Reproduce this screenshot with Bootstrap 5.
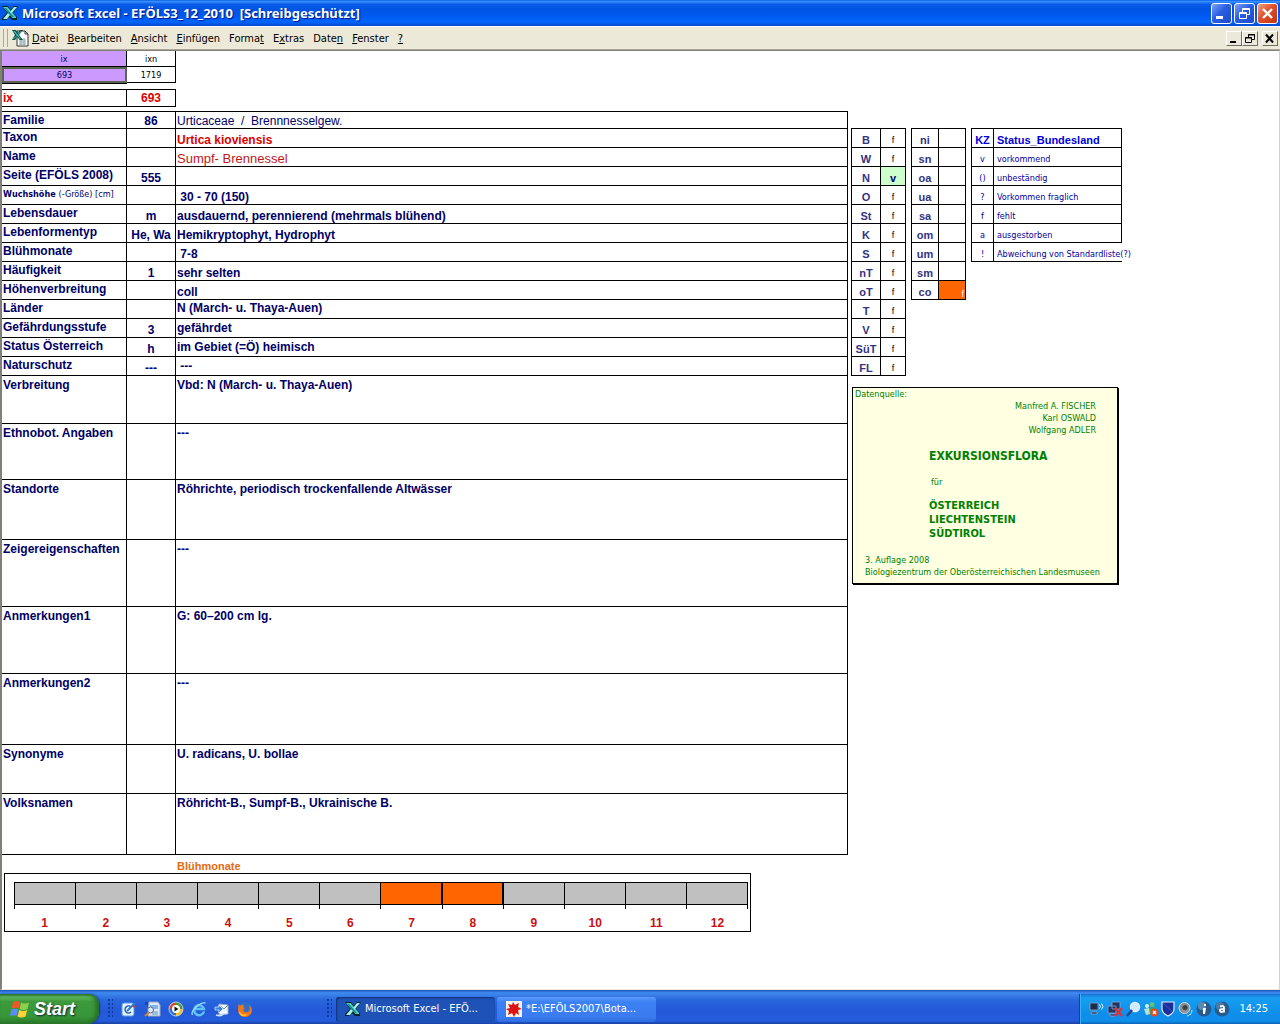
<!DOCTYPE html>
<html lang="de">
<head>
<meta charset="utf-8">
<meta name="viewport" content="width=device-width, initial-scale=1">
<title>Microsoft Excel - EFÖLS3_12_2010</title>
<link rel="stylesheet" href="https://cdn.jsdelivr.net/npm/bootstrap@5.3.0/dist/css/bootstrap.min.css">
<style>
:root{--ui:"DejaVu Sans Condensed","DejaVu Sans",Tahoma,sans-serif;--cell:"Liberation Sans",Arial,sans-serif;--navy:#000066}
body{font-family:var(--cell);font-size:12px;line-height:14px;color:var(--navy);background:#fff}
button{border-radius:0}
svg{display:block;flex:none}
/* window title */
.titlebar{height:26px;padding:0 2px;background:linear-gradient(#0058e6 0,#3a93ff 5%,#0b5cea 16%,#0054e3 35%,#0058ee 60%,#0066ff 85%,#0047c8 100%);color:#fff}
.titlebar h1{font:bold 13px/26px "Noto Sans",sans-serif;text-shadow:1px 1px 1px #00138c;white-space:pre;margin:0}
.titlebar .winset{gap:2px}
.winbtn{width:21px;height:21px;border:1px solid #fff;border-radius:3px;background:linear-gradient(135deg,#7da2f5,#2a5de0 45%,#1c49cf);padding:0}
.winbtn.close-win{background:linear-gradient(135deg,#f0a080,#e0502c 45%,#c2330e)}
/* menu */
.menubar{height:24px;background:#ece9d8;border-top:1px solid #fff;border-bottom:1px solid #aca899;padding:0 2px 0 3px;font-family:var(--ui)}
.menubar nav{gap:9px;padding:2px 0 0 3px}
.grip{width:5px;height:18px;border-left:1px solid #aca899;border-right:1px solid #aca899}
.menubar .mitem{border:0;background:none;padding:0;font-size:11px;line-height:14px;color:#000}
.mdibtn{width:16px;height:15px;padding:0;border:1px solid;border-color:#fff #716f64 #716f64 #fff;background:#ece9d8}
/* sheet */
.sheet{border-left:2px solid #808078;border-top:1px solid #808078;border-right:1px solid #d6d3c4;border-bottom:1px solid #ece9d8;background:#fff}
.grid{border-collapse:separate;border-spacing:0;table-layout:fixed}
.grid td,.grid th{border:0 solid #000;border-right-width:1px;border-bottom-width:1px;padding:0 1px;overflow:hidden;white-space:nowrap;font-weight:bold}
.keytab{width:174px;font:9px/14px var(--ui);text-align:center}
.keytab td{font-weight:normal;height:16px}
.keytab .purple{background:#cc99ff}
.keytab .sel{border:2px solid #5a6450;box-shadow:0 1px #000;line-height:12px;overflow:visible}
.ixtab{width:174px;margin-top:6px;color:#e00000;border-top:1px solid #000}
.ixtab th,.ixtab td{height:17px}
.main-t{width:846px;margin-top:4px;border-top:1px solid #000}
.main-t th{vertical-align:top;padding-top:1px;text-align:left}
.main-t td{vertical-align:bottom}
.main-t td:nth-child(2){text-align:center}
.main-t tr{height:19px}
.main-t tr.first{height:17px}
.main-t td.top{vertical-align:top;padding-top:1px}
.main-t .tall th,.main-t .tall td.top{padding-top:2px}
.main-t td.mid{vertical-align:middle}
.plain{font-size:13px}
.grid th.tiny9{font-family:var(--ui);font-size:9px}
.side{padding:77px 0 0 3px}
.side .tables{gap:5px}
.codes{border-top:1px solid #000;border-left:1px solid #000;font-size:11px;line-height:13px;text-align:center;color:#333380}
.codes tr{height:19px}
.codes td,.codes th{vertical-align:bottom}
.codes td{font-size:9px;font-weight:normal;color:#000}
.codes .hit{background:#ccffcc;color:#000080;font-weight:bold;font-size:11px}
.codes .orange{background:#ff6600;color:#fff;text-align:right;line-height:10px}
.legend-t{color:#0000a0}
.legend-t thead{color:#0000dd}
.legend-t td{font-family:var(--ui);color:#0000a0}
.legend-t td:last-child,.legend-t th:last-child{text-align:left;padding-left:3px;overflow:visible}
.source{width:266px;height:197px;margin:11px 0 0 1px;padding:0 12px;border:1px solid #000;box-shadow:1px 1px #000;background:#ffffe1;color:#008000;font:9px/12px var(--ui)}
.source .who{padding-right:9px}
.source .lead-in{margin-left:-10px}
.source .bigname{font:bold 12px/16px var(--ui);padding-top:12px}
.source .fuer{padding:12px 0 11px 2px}
.source .lands{font:bold 11px/14px var(--ui)}
.source .body-in{padding-left:64px}
.source .edition{padding-top:13px}
/* flowering chart */
.bloom-title{color:#e66a10;font-size:11px;font-weight:bold;padding-left:175px;margin-top:4px}
.bloom{width:747px;height:59px;margin:0 0 0 2px;border:1px solid #000;padding:8px 2px 0 9px;color:#cc1010;font-weight:bold}
.bloom .m{flex:1 1 0;border-left:1px solid #000;height:27px}
.bloom .m span{display:block;height:23px;background:#c0c0c0;border:1px solid #000;border-left:0;border-right:0}
.bloom .m.on span{background:#ff6600;border-right:1px solid #000}
.bloom .m:last-child{border-right:1px solid #000}
.bloom .labs{padding-top:7px}
.bloom .lab{flex:1 1 0;text-align:center}
/* taskbar */
.taskbar{height:34px;padding-top:4px;background:linear-gradient(#1f4fb8 0,#3d8af0 8%,#3a80e8 14%,#2766dd 30%,#2459d8 60%,#245ddc 90%,#1941a5 100%);font-family:var(--ui);color:#fff}
.start{width:99px;height:30px;border:0;border-radius:0 10px 12px 0;background:linear-gradient(#2f7a2f 0,#5cb85c 10%,#3c9a3c 25%,#379637 75%,#2b7a2b 100%);box-shadow:inset -3px 0 4px #256b25,1px 0 2px #123c8c;color:#fff;padding:0 0 0 10px}
.start b{font:italic bold 18px/20px "Liberation Sans",sans-serif;text-shadow:1px 1px 2px #123}
.dots{width:5px;height:20px;background:radial-gradient(circle at 1px 1px,#0f3a9c 1px,transparent 1px) 0 0/4px 4px}
.dots.d1{margin-left:9px}
.dots.d2{margin-left:74px}
.ql{border:0;background:none;padding:0}
.quick{gap:7px}
.tasks{gap:2px}
.task{width:159px;height:25px;padding:0 9px;border:0;border-radius:3px;color:#fff;font-size:11px;background:linear-gradient(#5a9bff,#3c81f3 20%,#3a7bf0 80%,#2f6be0);text-align:left}
.task.active-t{background:#1e52b7;box-shadow:inset 1px 1px 2px #0f3074}
.tray{width:201px;padding:0 12px 0 9px;border-left:1px solid #0b3fa8;box-shadow:inset 1px 0 #35b5f5;background:linear-gradient(#1a6fd0 0,#1a9bf0 12%,#129aee 30%,#0f8dea 70%,#1090ea 90%,#0a62b8 100%);font-size:11px}
.tray .icons{gap:2px}
</style>
<script src="https://cdn.jsdelivr.net/npm/bootstrap@5.3.0/dist/js/bootstrap.bundle.min.js" defer></script>
</head>
<body class="d-flex flex-column min-vh-100">
<svg width="0" height="0" class="position-absolute" aria-hidden="true">
  <symbol id="xl" viewBox="0 0 16 16">
    <path d="M0 1h6l3 4 3-4h4l-5 7 4 4v3h-5l-3-3-3 3H0v-2l5-5z" fill="#06262a"/>
    <path d="M1 2h4.500l8.500 10v1h-3.500z" fill="#4fd6cf"/>
    <path d="M12 2h3l-5 6-2-1zM1 14l5-6 2 2-3 4z" fill="#a8efe6"/>
    <path d="M2 3h2l8 9h-2z" fill="#158a8a"/>
  </symbol>
</svg>

<header>
  <div class="titlebar d-flex align-items-center gap-1">
    <svg width="16" height="16"><use href="#xl"/></svg>
    <h1 class="flex-grow-1">Microsoft Excel - EFÖLS3_12_2010  [Schreibgeschützt]</h1>
    <div class="d-flex winset">
      <button class="winbtn" aria-label="Minimieren"><svg width="19" height="19"><path d="M4 12h7v3H4z" fill="#fff"/></svg></button>
      <button class="winbtn" aria-label="Wiederherstellen"><svg width="19" height="19" fill="none" stroke="#fff"><path d="M7.500 8V4.500h7v6H12M7 5.500h8"/><path d="M4.500 8.500h7v6h-7zM4 9.500h8"/></svg></button>
      <button class="winbtn close-win" aria-label="Schließen"><svg width="19" height="19"><path d="M5 5l9 9M14 5l-9 9" stroke="#fff" stroke-width="2.400"/></svg></button>
    </div>
  </div>
  <div class="menubar d-flex align-items-center">
    <span class="grip"></span>
    <svg class="ms-1" width="17" height="18" viewBox="0 0 17 18"><path d="M5 2h8l3 3v12H5z" fill="#fff" stroke="#333"/><path d="M7 11h7M7 13h7M7 15h7M9 9v7M12 9v7" stroke="#8aa"/><path d="M0 1h4l2 3 2-3h3L7 6l4 5H8L5 8l-2 3H0l3-5z" fill="#0a4a44"/><path d="M1 2h2l6 8H8zM9 2h1L2 10H1z" fill="#3cc4b8"/><path d="M13 2v3h3" fill="none" stroke="#333"/></svg>
    <nav class="d-flex flex-grow-1" aria-label="Menü">
      <button class="mitem"><u>D</u>atei</button><button class="mitem"><u>B</u>earbeiten</button><button class="mitem"><u>A</u>nsicht</button><button class="mitem"><u>E</u>infügen</button><button class="mitem">Forma<u>t</u></button><button class="mitem">E<u>x</u>tras</button><button class="mitem">Date<u>n</u></button><button class="mitem"><u>F</u>enster</button><button class="mitem"><u>?</u></button>
    </nav>
    <button class="mdibtn" aria-label="Mappe minimieren"><svg width="14" height="13"><path d="M3 9h6v2H3z"/></svg></button>
    <button class="mdibtn" aria-label="Mappe wiederherstellen"><svg width="14" height="13" fill="none" stroke="#000"><path d="M5.500 5V2.500h6v5H9M5 3h7M2.500 5.500h6v5h-6zM2 6h7"/></svg></button>
    <button class="mdibtn ms-1" aria-label="Mappe schließen"><svg width="14" height="13"><path d="M3 2.500l7 8M10 2.500l-7 8" stroke="#000" stroke-width="2"/></svg></button>
  </div>
</header>

<main class="sheet flex-grow-1 d-flex align-items-start">
  <section>
    <table class="grid keytab">
      <colgroup><col style="width:125px"><col></colgroup>
      <tr><td class="purple">ix</td><td class="text-black">ixn</td></tr>
      <tr><td class="purple sel">693</td><td class="text-black">1719</td></tr>
    </table>
    <table class="grid ixtab">
      <colgroup><col style="width:125px"><col></colgroup>
      <tr><th scope="row">ix</th><td class="text-center">693</td></tr>
    </table>
    <table class="grid main-t">
      <colgroup><col style="width:125px"><col style="width:49px"><col></colgroup>
      <tr class="first"><th scope="row">Familie</th><td>86</td><td class="fw-normal" style="white-space:pre">Urticaceae  /  Brennnesselgew.</td></tr>
      <tr><th scope="row">Taxon</th><td></td><td style="color:#dd0000">Urtica kioviensis</td></tr>
      <tr><th scope="row">Name</th><td></td><td class="fw-normal plain" style="color:#c01818">Sumpf- Brennessel</td></tr>
      <tr><th scope="row">Seite (EFÖLS 2008)</th><td>555</td><td></td></tr>
      <tr><th scope="row" class="tiny9">Wuchshöhe <span class="fw-normal">(-Größe) [cm]</span></th><td></td><td>&nbsp;30 - 70 (150)</td></tr>
      <tr><th scope="row">Lebensdauer</th><td>m</td><td>ausdauernd, perennierend (mehrmals blühend)</td></tr>
      <tr><th scope="row">Lebenformentyp</th><td>He, Wa</td><td>Hemikryptophyt, Hydrophyt</td></tr>
      <tr><th scope="row">Blühmonate</th><td></td><td>&nbsp;7-8</td></tr>
      <tr><th scope="row">Häufigkeit</th><td>1</td><td>sehr selten</td></tr>
      <tr><th scope="row">Höhenverbreitung</th><td></td><td>coll</td></tr>
      <tr><th scope="row">Länder</th><td></td><td class="top">N (March- u. Thaya-Auen)</td></tr>
      <tr><th scope="row">Gefährdungsstufe</th><td>3</td><td class="mid">gefährdet</td></tr>
      <tr><th scope="row">Status Österreich</th><td>h</td><td class="mid">im Gebiet (=Ö) heimisch</td></tr>
      <tr><th scope="row">Naturschutz</th><td>---</td><td class="mid">&nbsp;---</td></tr>
      <tr class="tall" style="height:48px"><th scope="row">Verbreitung</th><td></td><td class="top">Vbd: N (March- u. Thaya-Auen)</td></tr>
      <tr class="tall" style="height:56px"><th scope="row">Ethnobot. Angaben</th><td></td><td class="top">---</td></tr>
      <tr class="tall" style="height:60px"><th scope="row">Standorte</th><td></td><td class="top">Röhrichte, periodisch trockenfallende Altwässer</td></tr>
      <tr class="tall" style="height:67px"><th scope="row">Zeigereigenschaften</th><td></td><td class="top">---</td></tr>
      <tr class="tall" style="height:67px"><th scope="row">Anmerkungen1</th><td></td><td class="top">G: 60–200 cm lg.</td></tr>
      <tr class="tall" style="height:71px"><th scope="row">Anmerkungen2</th><td></td><td class="top">---</td></tr>
      <tr class="tall" style="height:49px"><th scope="row">Synonyme</th><td></td><td class="top">U. radicans, U. bollae</td></tr>
      <tr class="tall" style="height:61px"><th scope="row">Volksnamen</th><td></td><td class="top">Röhricht-B., Sumpf-B., Ukrainische B.</td></tr>
    </table>
    <div class="bloom-title">Blühmonate</div>
    <div class="bloom">
      <div class="d-flex">
        <div class="m"><span></span></div><div class="m"><span></span></div><div class="m"><span></span></div><div class="m"><span></span></div><div class="m"><span></span></div><div class="m"><span></span></div><div class="m on"><span></span></div><div class="m on"><span></span></div><div class="m"><span></span></div><div class="m"><span></span></div><div class="m"><span></span></div><div class="m"><span></span></div>
      </div>
      <div class="d-flex labs">
        <div class="lab">1</div><div class="lab">2</div><div class="lab">3</div><div class="lab">4</div><div class="lab">5</div><div class="lab">6</div><div class="lab">7</div><div class="lab">8</div><div class="lab">9</div><div class="lab">10</div><div class="lab">11</div><div class="lab">12</div>
      </div>
    </div>
  </section>

  <aside class="side">
    <div class="d-flex align-items-start tables">
      <table class="grid codes" style="width:55px">
        <colgroup><col style="width:29px"><col></colgroup>
        <tr><th>B</th><td>f</td></tr><tr><th>W</th><td>f</td></tr><tr><th>N</th><td class="hit">v</td></tr><tr><th>O</th><td>f</td></tr><tr><th>St</th><td>f</td></tr><tr><th>K</th><td>f</td></tr><tr><th>S</th><td>f</td></tr><tr><th>nT</th><td>f</td></tr><tr><th>oT</th><td>f</td></tr><tr><th>T</th><td>f</td></tr><tr><th>V</th><td>f</td></tr><tr><th>SüT</th><td>f</td></tr><tr><th>FL</th><td>f</td></tr>
      </table>
      <table class="grid codes" style="width:55px">
        <colgroup><col style="width:27px"><col></colgroup>
        <tr><th>ni</th><td></td></tr><tr><th>sn</th><td></td></tr><tr><th>oa</th><td></td></tr><tr><th>ua</th><td></td></tr><tr><th>sa</th><td></td></tr><tr><th>om</th><td></td></tr><tr><th>um</th><td></td></tr><tr><th>sm</th><td></td></tr><tr><th>co</th><td class="orange">f</td></tr>
      </table>
      <table class="grid codes legend-t" style="width:151px">
        <colgroup><col style="width:22px"><col></colgroup>
        <thead><tr><th>KZ</th><th>Status_Bundesland</th></tr></thead>
        <tbody>
        <tr><td>v</td><td>vorkommend</td></tr><tr><td>()</td><td>unbeständig</td></tr><tr><td>?</td><td>Vorkommen fraglich</td></tr><tr><td>f</td><td>fehlt</td></tr><tr><td>a</td><td>ausgestorben</td></tr><tr><td>!</td><td class="border-end-0">Abweichung von Standardliste(?)</td></tr>
        </tbody>
      </table>
    </div>
    <div class="source">
      <div class="lead-in">Datenquelle:</div>
      <div class="text-end who">Manfred A. FISCHER<br>Karl OSWALD<br>Wolfgang ADLER</div>
      <div class="body-in">
        <div class="bigname">EXKURSIONSFLORA</div>
        <div class="fuer">für</div>
        <div class="lands">ÖSTERREICH<br>LIECHTENSTEIN<br>SÜDTIROL</div>
      </div>
      <div class="text-nowrap edition">3. Auflage 2008<br>Biologiezentrum der Oberösterreichischen Landesmuseen</div>
    </div>
  </aside>
</main>

<footer class="taskbar d-flex align-items-center">
  <button class="start d-flex align-items-center gap-1">
    <svg width="20" height="20" viewBox="0 0 20 20"><path d="M3 3q4-2 7 0L8.500 9.500Q5 8 1.500 9.500z" fill="#f0562a"/><path d="M11 3.500q3.500 2 8 0L17.500 10q-4 2-8 0z" fill="#8ad04a"/><path d="M1.300 10.500q3.500-1.500 7 0L6.500 17Q3 15.500 0 17z" fill="#5a8df8"/><path d="M9.200 11q4 2 8 0L15.500 17.500q-4 2-8 0z" fill="#ffd23c"/></svg>
    <b>Start</b>
  </button>
  <span class="dots d1"></span>
  <div class="d-flex align-items-center ps-2 quick">
    <button class="ql" aria-label="Desktop anzeigen"><svg width="16" height="16"><rect x="1" y="2" width="12" height="13" rx="2" fill="#e6f3ff" stroke="#5a9ad8"/><path d="M10 6a3.500 3.500 0 1 0 0 5" fill="none" stroke="#1b5fae" stroke-width="1.500"/><path d="M6 10l8-8" stroke="#2f7ad0" stroke-width="2"/><path d="M12 5l3 1" stroke="#c33" stroke-width="2"/></svg></button>
    <button class="ql" aria-label="Suche"><svg width="17" height="16"><path d="M5 1h9l2 3v11H4z" fill="#dceaf8" stroke="#9ab"/><path d="M6 4h8v4H6z" fill="#7fb4ec"/><path d="M8 11h6M8 13h6" stroke="#5b8fd0"/><path d="M1 1h3v3H1z" fill="#1a3fc0"/><circle cx="6.500" cy="9" r="3" fill="#d8eeff" stroke="#667"/><path d="M5 11.500l-4 3.500" stroke="#d8843c" stroke-width="2"/></svg></button>
    <button class="ql" aria-label="Media Player"><svg width="16" height="16"><path d="M8 8V1a7 7 0 0 1 7 7z" fill="#4a9b3a"/><path d="M8 8h7a7 7 0 0 1-7 7z" fill="#f0c020"/><path d="M8 8v7a7 7 0 0 1-7-7z" fill="#2f6fd8"/><path d="M8 8H1a7 7 0 0 1 7-7z" fill="#e0482a"/><circle cx="8" cy="8" r="7" fill="none" stroke="#d8e4f2" stroke-width=".8"/><circle cx="8" cy="8" r="4" fill="#fff"/><path d="M6.500 5.500v5l4-2.500z" fill="#111"/></svg></button>
    <button class="ql" aria-label="Internet Explorer"><svg width="16" height="16" fill="none"><path d="M13 10.500A5 5 0 1 1 13 8H4.500" stroke="#5ec3f8" stroke-width="2.500"/><path d="M1.500 14C-1 10 9 1 14.500 2" stroke="#9adcff" stroke-width="1.300"/></svg></button>
    <button class="ql" aria-label="Outlook Express"><svg width="16" height="16"><path d="M5 3l9 1v9l-9 1z" fill="#f2f8ff" stroke="#9ac"/><path d="M5 4l5 4 4-4" fill="none" stroke="#68a"/><path d="M1 6h4V4l4 4-4 4V9H1z" fill="#2f86e0" stroke="#fff" stroke-width=".6"/><path d="M2 14q6 2 8-2" fill="none" stroke="#cfe6ff" stroke-width="1.500"/></svg></button>
    <button class="ql" aria-label="Firefox"><svg width="16" height="16"><circle cx="8" cy="8" r="7" fill="#2f6fc8"/><path d="M2 2q0 2 1 3 2-2 4-1L6 6l2 1-2 2q1 3 5 2 3-2 1-7 3 2 3 5a7 7 0 0 1-14 0q0-4 1-7z" fill="#f07818"/><path d="M2 10q3 5 9 3-3 3-6 2T2 10z" fill="#ffc030"/></svg></button>
  </div>
  <span class="dots d2"></span>
  <div class="d-flex ps-1 tasks">
    <button class="task active-t d-flex align-items-center gap-1"><svg width="16" height="16"><use href="#xl"/></svg>Microsoft Excel - EFÖ...</button>
    <button class="task d-flex align-items-center gap-1"><svg width="16" height="16"><path d="M0 0h16v16H0z" fill="#f6f0ee"/><path d="M7 1l2 3 4-2-1 4 4 2-4 1 1 5-3-2-2 4-2-4-4 2 1-4-3-2 4-1-2-4 4 1z" fill="#dd1414"/></svg>*E:\EFÖLS2007\Bota...</button>
  </div>
  <div class="tray d-flex align-items-center align-self-stretch ms-auto">
    <div class="d-flex align-items-center icons">
      <svg width="16" height="16"><path d="M1 2h8v7H1zM3 11h5v2H2z" fill="#1d2d4a" stroke="#8aa4c8" stroke-width=".8"/><path d="M10.500 3.500q2 2 0 4M12.500 2.500q3 3 0 6" fill="none" stroke="#d6eeff"/></svg>
      <svg width="16" height="16"><path d="M5 1h8v7H5zM1 5h8v7H1zM3 13h6v2H3z" fill="#1f3560" stroke="#8aa4d8" stroke-width=".8"/><path d="M8 7l7 8M15 7l-7 8" stroke="#e03030" stroke-width="2.400"/></svg>
      <svg width="16" height="16"><circle cx="10" cy="6" r="4.500" fill="#cdeaff" stroke="#eef" stroke-width="1.500"/><path d="M7 9l-5 6" stroke="#24458a" stroke-width="2.500"/></svg>
      <svg width="16" height="16"><circle cx="9" cy="3.500" r="2.500" fill="#5cc080"/><path d="M5 7l7-1 2 5-5 4-3-2z" fill="#3da060"/><circle cx="4" cy="5" r="2" fill="#d8f0e0"/><path d="M1 8l5-1 1 6-4 1z" fill="#b8e0d0"/><circle cx="11.500" cy="11.500" r="4" fill="#e04a20"/><path d="M10 10l3 3M13 10l-3 3" stroke="#fff" stroke-width="1.300"/></svg>
      <svg width="15" height="16"><path d="M1 1h12v7q0 4-6 7-6-3-6-7z" fill="#1a2f9a" stroke="#e4e8ff" stroke-width="1.200"/><path d="M2 2l10 9" stroke="#3c58c8"/></svg>
      <svg width="16" height="16"><circle cx="6.500" cy="7" r="5.500" fill="#8b9096" stroke="#d6d6d6"/><circle cx="7" cy="6.500" r="2.500" fill="#3a4048"/><path d="M12 14q2-2 2-5M9 15q2 0 3-2" stroke="#bfe4ff" fill="none"/></svg>
      <svg width="16" height="16"><circle cx="8" cy="8" r="7.500" fill="#2a5a8c"/><circle cx="6" cy="5" r="4" fill="#5d8ab5"/><path d="M8 3h2v2H8zM7 7h3l-1 6H7z" fill="#fff"/></svg>
      <svg width="16" height="16"><circle cx="8" cy="8" r="7.500" fill="#2a5a8c"/><circle cx="6" cy="5" r="4" fill="#4d7aa5"/><path d="M6 5.500q4-1.500 4 1v5M10 8q-5 0-4 2t4 0" fill="none" stroke="#fff" stroke-width="1.800"/></svg>
    </div>
    <time class="ms-auto">14:25</time>
  </div>
</footer>
</body>
</html>
